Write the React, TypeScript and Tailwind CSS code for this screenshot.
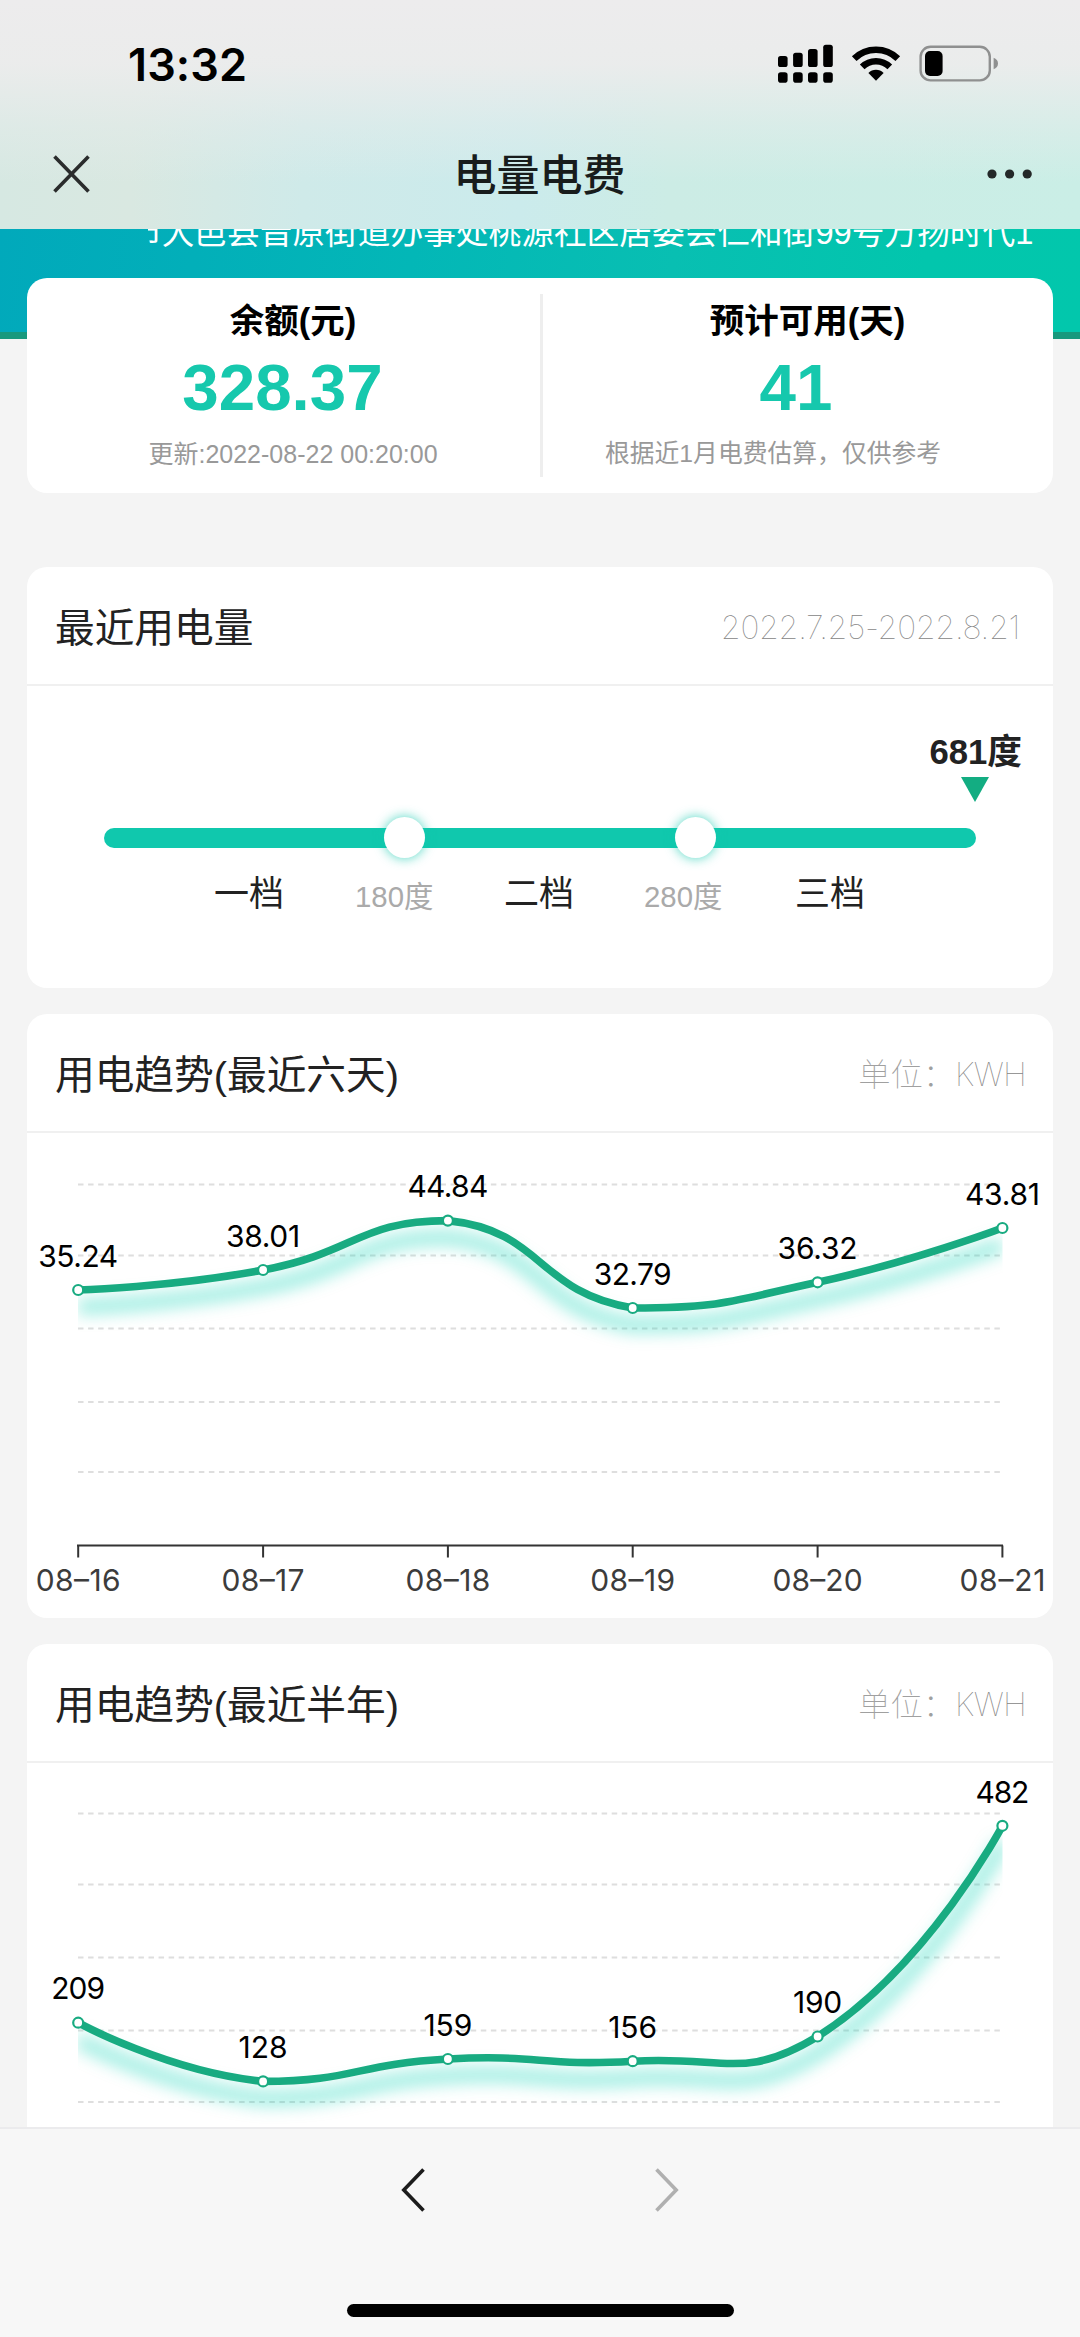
import React from "react";

type Point = [number, number];

const SANS = "font-['Liberation_Sans','Noto_Sans_CJK_SC',sans-serif]";

/* Cubic smoothing through the points, control points kept inside their bounding box. */
function smoothPath(pts: Point[], smooth = 0.5): string {
  const xs = pts.map((p) => p[0]);
  const ys = pts.map((p) => p[1]);
  const clamp = (p: Point): Point => [
    Math.max(Math.min(...xs), Math.min(Math.max(...xs), p[0])),
    Math.max(Math.min(...ys), Math.min(Math.max(...ys), p[1])),
  ];
  let d = `M${pts[0][0]} ${pts[0][1]}`;
  let cp0: Point = pts[0];
  for (let i = 1; i < pts.length; i++) {
    const p = pts[i];
    const prev = pts[i - 1];
    let cp1: Point = p;
    let next0: Point = p;
    if (i < pts.length - 1) {
      const next = pts[i + 1];
      const v: Point = [next[0] - prev[0], next[1] - prev[1]];
      const lp = Math.hypot(p[0] - prev[0], p[1] - prev[1]);
      const ln = Math.hypot(next[0] - p[0], next[1] - p[1]);
      const r = ln / (ln + lp);
      cp1 = [p[0] - v[0] * smooth * (1 - r), p[1] - v[1] * smooth * (1 - r)];
      next0 = [p[0] + v[0] * smooth * r, p[1] + v[1] * smooth * r];
    }
    const a = clamp(cp0);
    const b = clamp(cp1);
    d += `C${a[0]} ${a[1]} ${b[0]} ${b[1]} ${p[0]} ${p[1]}`;
    cp0 = next0;
  }
  return d;
}

interface ChartProps {
  id: string;
  height: number;
  grid: number[];
  points: Point[];
  values: { text: string; width: number }[];
  axisY?: number;
  labels?: { text: string; width: number }[];
}

function TrendChart({ id, height, grid, points, values, axisY, labels }: ChartProps) {
  const d = smoothPath(points);
  return (
    <svg
      className="block shrink-0 font-['Inter',sans-serif]"
      width={1026}
      height={height}
      viewBox={`27 0 1026 ${height}`}
    >
      <defs>
        <clipPath id={`${id}-clip`}>
          <rect x="78" y="0" width="924.5" height={height} />
        </clipPath>
        <filter id={`${id}-blur`} filterUnits="userSpaceOnUse" x="0" y="-50" width="1080" height={height + 100}>
          <feGaussianBlur stdDeviation="8" />
        </filter>
      </defs>
      {grid.map((y) => (
        <line key={y} x1="78" x2="1002.5" y1={y} y2={y} stroke="#dedede" strokeWidth="2" strokeDasharray="5.5 4.57" />
      ))}
      {axisY !== undefined && (
        <g stroke="#333" strokeWidth="2">
          <line x1="77" x2="1003" y1={axisY} y2={axisY} />
          {points.map(([x]) => (
            <line key={x} x1={x} x2={x} y1={axisY} y2={axisY + 12} />
          ))}
        </g>
      )}
      <g clipPath={`url(#${id}-clip)`}>
        <path d={d} fill="none" stroke="#0fcfb2" strokeOpacity="0.36" strokeWidth="16" transform="translate(0 17)" filter={`url(#${id}-blur)`} />
      </g>
      <path d={d} fill="none" stroke="#18ab81" strokeWidth="7.6" />
      {points.map(([x, y], i) => (
        <g key={x}>
          <circle cx={x} cy={y} r="5" fill="#fff" stroke="#18ab81" strokeWidth="2.2" />
          <text x={x} y={y - 23.3} fontSize="30" textAnchor="middle" fill="#000" textLength={values[i].width} lengthAdjust="spacing">
            {values[i].text}
          </text>
        </g>
      ))}
      {axisY !== undefined &&
        labels?.map((l, i) => (
          <text key={l.text} x={points[i][0]} y={axisY + 45} fontSize="30" textAnchor="middle" fill="#3c3c3c" textLength={l.width} lengthAdjust="spacing">
            {l.text}
          </text>
        ))}
    </svg>
  );
}

function CardHeader({ title, children }: { title: string; children: React.ReactNode }) {
  return (
    <header className="flex h-[119px] shrink-0 items-center justify-between border-b-2 border-[#f0f0f0] pt-[4px] pl-[28px] text-[#222]">
      <h2 className="text-[39.7px] leading-[60px]">{title}</h2>
      {children}
    </header>
  );
}

function Unit() {
  return (
    <span className="flex pr-[27px] text-[32.3px] leading-[48px] font-thin">
      <span className="-mt-[3px] font-['Noto_Sans_CJK_SC',sans-serif] text-[#a0a0a0]">单位：</span>
      <span className="font-['Inter',sans-serif] tracking-[-0.7px] text-[#858585]">KWH</span>
    </span>
  );
}

function StatusIcons() {
  return (
    <svg width="222" height="40" viewBox="777 43 222 40" className="block">
      <g>
        {[
          [778, 56],
          [793.1, 52.7],
          [808, 49],
          [823.2, 44.7],
        ].map(([x, y]) => (
          <g key={x}>
            <rect x={x} y={y} width="9.6" height={67 - y} rx="2.6" />
            <rect x={x} y="72.3" width="9.6" height="10.4" rx="2.8" />
          </g>
        ))}
      </g>
      <path d="M876 80.8l-7.6-7.9a10.8 10.8 0 0 1 15.2 0z" />
      <g fill="none" stroke="#000" strokeWidth="6.6">
        <path d="M862.2 66.9a19.6 19.6 0 0 1 27.6 0" />
        <path d="M854.2 58.6a31.2 31.2 0 0 1 43.6 0" />
      </g>
      <rect x="920.6" y="46.8" width="69.2" height="33.6" rx="10" fill="none" stroke="#8f9090" strokeWidth="2.4" />
      <rect x="925" y="51" width="17.6" height="25" rx="5" />
      <path d="M993.6 57.7c2.8 1 4.4 3 4.4 5.8s-1.6 4.8-4.4 5.8z" fill="#8f9090" />
    </svg>
  );
}

function Tier({ name }: { name: string }) {
  return <span className="w-[70px] shrink-0 text-[35px] leading-[50px] text-[#222]">{name}</span>;
}

function Threshold({ value }: { value: string }) {
  return <span className="w-[79px] shrink-0 pt-[3px] text-[29.4px] leading-[50px] text-[#aaa]">{value}</span>;
}

export default function App() {
  return (
    <div className={`flex h-[2337px] w-[1080px] flex-col overflow-hidden bg-[#f4f4f4] ${SANS}`}>
      {/* Translucent system status bar and navigation bar */}
      <div className="flex h-[229px] shrink-0 flex-col bg-[linear-gradient(180deg,#edeced_0%,rgba(236,236,236,0.95)_28%,rgba(230,236,235,0.5)_55%,rgba(230,236,235,0)_80%),linear-gradient(90deg,#d6e8e2_0%,#d9e8e1_12%,#cfeae9_28%,#cbebec_48%,#ccece5_62%,#caeee6_100%)]">
        <div className="flex h-[126px] items-start justify-between pt-[43px] pr-[81px] pl-[128px]">
          <span className="font-['Inter',sans-serif] text-[45px] leading-[44px] font-semibold tracking-[0.1px] text-black">13:32</span>
          <StatusIcons />
        </div>
        <div className="flex h-[96px] items-center justify-between pr-[48px] pl-[53px]">
          <svg width="37" height="38" viewBox="0 0 37 38" fill="none" stroke="#2a2c2c" strokeWidth="3.6">
            <path d="M1.5 1.5l34 35M35.5 1.5l-34 35" />
          </svg>
          <h1 className="pt-[3px] pl-[3px] text-[43px] leading-[60px] font-medium text-[#181c1c]">电量电费</h1>
          <svg width="46" height="10" viewBox="0 0 46 10" fill="#242828">
            <circle cx="6" cy="5" r="4.6" />
            <circle cx="23.6" cy="5" r="4.6" />
            <circle cx="41.2" cy="5" r="4.6" />
          </svg>
        </div>
      </div>

      {/* Account banner with the scrolling address */}
      <div className="h-[110px] shrink-0 border-b-[7px] border-[#18997d] bg-[linear-gradient(97deg,#01a9bb_0%,#02afb9_18%,#03b7b7_38%,#08bfb2_62%,#02c6ad_85%,#02c7ac_100%)]">
        <div className="ml-[148px] flex h-[44px] w-[886px] overflow-hidden">
          <p className="-mt-[18px] -ml-[19px] text-[32.7px] leading-[44px] whitespace-nowrap text-white">
            市大邑县晋原街道办事处桃源社区居委会仁和街99号万扬时代1
          </p>
        </div>
      </div>

      <main className="-mt-[61px] flex min-h-0 flex-1 flex-col overflow-hidden px-[27px]">
        <section className="flex h-[215px] shrink-0 rounded-[20px] bg-white">
          <div className="flex w-[513px] flex-col items-center pt-[19px]">
            <h3 className="pl-[19px] text-[34.5px] leading-[48px] font-bold text-black">余额(元)</h3>
            <strong className="mt-[8px] pr-[2px] text-[65.5px] leading-[70px] font-bold text-[#16c8ad]">328.37</strong>
            <p className="mt-[13px] pl-[19px] text-[25px] leading-[36px] text-[#999]">更新:2022-08-22 00:20:00</p>
          </div>
          <div className="mt-[16px] h-[183px] w-[3px] bg-[#eee]" />
          <div className="flex flex-1 flex-col items-center pt-[19px]">
            <h3 className="pl-[19px] text-[34.5px] leading-[48px] font-bold text-black">预计可用(天)</h3>
            <strong className="mt-[8px] pr-[4px] text-[65.5px] leading-[70px] font-bold text-[#16c8ad]">41</strong>
            <p className="mt-[13px] pr-[50px] text-[24.8px] leading-[36px] text-[#999]">根据近1月电费估算，仅供参考</p>
          </div>
        </section>

        <section className="mt-[74px] flex h-[421px] shrink-0 flex-col rounded-[20px] bg-white">
          <CardHeader title="最近用电量">
            <span className="pr-[33px] font-['Inter',sans-serif] text-[32px] leading-[48px] font-thin tracking-[-0.3px] text-[#858585]">
              2022.7.25-2022.8.21
            </span>
          </CardHeader>
          <div className="flex flex-col items-end pt-[42px] pr-[31px]">
            <strong className="text-[34.7px] leading-[48px] font-bold text-[#222]">681度</strong>
            <svg width="28" height="25" viewBox="0 0 28 25" className="mt-[1px] mr-[33px]">
              <path d="M0 0H28L14 25Z" fill="#13ad82" />
            </svg>
          </div>
          <div className="mt-[15px] ml-[77px] flex h-[41px] w-[872px] items-center">
            <div className="flex h-[20px] w-full items-center rounded-full bg-[#10c8ad]">
              <div className="ml-[280px] size-[41px] shrink-0 rounded-full bg-white shadow-[0_0_12px_rgba(16,200,173,0.75)]" />
              <div className="ml-[250px] size-[41px] shrink-0 rounded-full bg-white shadow-[0_0_12px_rgba(16,200,173,0.75)]" />
            </div>
          </div>
          <div className="mt-[11px] ml-[187px] flex">
            <Tier name="一档" />
            <div className="flex w-[220px] shrink-0 pl-[71px]">
              <Threshold value="180度" />
            </div>
            <Tier name="二档" />
            <div className="flex w-[221px] shrink-0 pl-[70px]">
              <Threshold value="280度" />
            </div>
            <Tier name="三档" />
          </div>
        </section>

        <section className="mt-[26px] flex h-[604px] shrink-0 flex-col rounded-[20px] bg-white">
          <CardHeader title="用电趋势(最近六天)">
            <Unit />
          </CardHeader>
          <TrendChart
            id="days"
            height={485}
            grid={[51.5, 122.5, 195.5, 269, 339]}
            axisY={412.5}
            points={[
              [78.2, 157],
              [263.1, 137],
              [447.9, 87.6],
              [632.7, 175],
              [817.6, 149.3],
              [1002.4, 95],
            ]}
            values={[
              { text: "35.24", width: 80 },
              { text: "38.01", width: 74 },
              { text: "44.84", width: 81 },
              { text: "32.79", width: 78 },
              { text: "36.32", width: 80 },
              { text: "43.81", width: 75 },
            ]}
            labels={[
              { text: "08–16", width: 85 },
              { text: "08–17", width: 83 },
              { text: "08–18", width: 85 },
              { text: "08–19", width: 85 },
              { text: "08–20", width: 90 },
              { text: "08–21", width: 86 },
            ]}
          />
        </section>

        <section className="mt-[26px] flex h-[604px] shrink-0 flex-col rounded-[20px] bg-white">
          <CardHeader title="用电趋势(最近半年)">
            <Unit />
          </CardHeader>
          <TrendChart
            id="months"
            height={485}
            grid={[50.5, 121.5, 194.5, 267.5, 339]}
            points={[
              [78.2, 259.7],
              [263.1, 318.4],
              [447.9, 296],
              [632.7, 298.2],
              [817.6, 273.5],
              [1002.4, 62.8],
            ]}
            values={[
              { text: "209", width: 54 },
              { text: "128", width: 49 },
              { text: "159", width: 49 },
              { text: "156", width: 49 },
              { text: "190", width: 49 },
              { text: "482", width: 54 },
            ]}
          />
        </section>
      </main>

      {/* Browser toolbar and home indicator */}
      <footer className="flex h-[210px] shrink-0 flex-col items-center border-t-2 border-[#ebebed] bg-[#f7f7f7]">
        <div className="flex h-[121px] w-[278px] items-center justify-between">
          <svg width="24" height="44" viewBox="0 0 24 44" fill="none" stroke="#1c1c1c" strokeWidth="3.6">
            <path d="M22.5 1.5L2.8 22L22.5 42.5" />
          </svg>
          <svg width="24" height="44" viewBox="0 0 24 44" fill="none" stroke="#b0b0b0" strokeWidth="3.6">
            <path d="M1.5 1.5L21.2 22L1.5 42.5" />
          </svg>
        </div>
        <div className="mt-[54px] h-[13px] w-[387px] rounded-full bg-black" />
      </footer>
    </div>
  );
}
